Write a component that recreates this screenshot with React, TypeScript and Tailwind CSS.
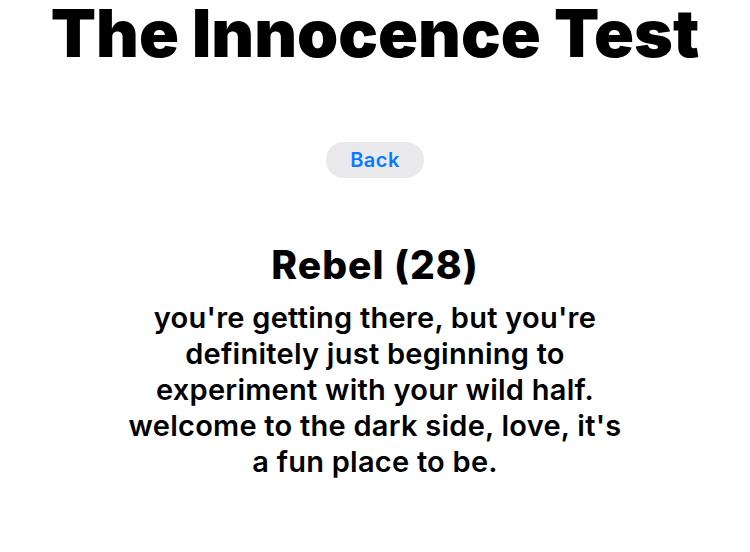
export default function App() {
  return (
    <div
      className="flex min-h-[552px] w-full flex-col items-center bg-white text-black"
      style={{ fontFamily: 'Inter, "Noto Sans", sans-serif' }}
    >
      <h1 className="text-[66px] font-black leading-none">The Innocence Test</h1>

      <button className="mt-[76px] h-9 w-[98px] rounded-full bg-[#e9e9eb] text-[20px] font-semibold tracking-[0.5px] text-[#0a7aff]">
        Back
      </button>

      <h2 className="mt-[65px] text-[39px] font-extrabold leading-[44px] tracking-[1px]">Rebel (28)</h2>

      <p className="mt-[13px] text-center text-[29px] font-semibold leading-[36px] tracking-[0.25px]">
        you're getting there, but you're
        <br />
        definitely just beginning to
        <br />
        experiment with your wild half.
        <br />
        welcome to the dark side, love, it's
        <br />
        a fun place to be.
      </p>
    </div>
  );
}
